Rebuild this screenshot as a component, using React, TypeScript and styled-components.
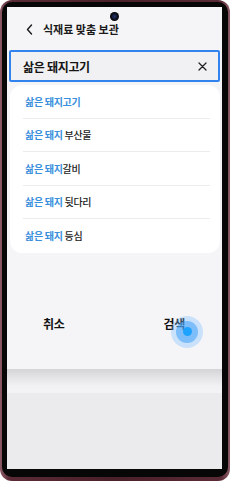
import React from "react";
import styled, { createGlobalStyle } from "styled-components";

const Global = createGlobalStyle`
  html, body { margin: 0; padding: 0; background: #ffffff; }
  body { font-family: "Noto Sans CJK KR", "Noto Sans", sans-serif; }
  * { box-sizing: border-box; }
`;

const Frame = styled.div`
  width: 230px;
  height: 481px;
  border-radius: 12px;
  padding: 2px 2px 4px 2px;
  background: linear-gradient(90deg, #8c5b67 0%, #5a2b36 4%, #4a2029 50%, #5a2b36 96%, #8c5b67 100%);
`;

const Bezel = styled.div`
  width: 100%;
  height: 100%;
  border-radius: 10px;
  background: #070707;
  padding: 5px 6px 8px 5px;
`;

const Screen = styled.div`
  position: relative;
  width: 215px;
  height: 462px;
  display: flex;
  flex-direction: column;
  overflow: hidden;
  background: #ebebed;
`;

const Sheet = styled.div`
  height: 362px;
  background: #f5f5f7;
  display: flex;
  flex-direction: column;
  position: relative;
  z-index: 1;
`;

const Camera = styled.div`
  position: absolute;
  left: 103px;
  top: 5px;
  width: 9px;
  height: 9px;
  border-radius: 50%;
  background: radial-gradient(circle, #24336a 0%, #141c3a 35%, #050505 62%);
  z-index: 5;
`;

const Header = styled.div`
  height: 24px;
  margin-top: 10px;
  display: flex;
  align-items: center;
  padding-left: 19px;
  gap: 10px;
`;

const Title = styled.span`
  font-size: 11px;
  font-weight: 700;
  color: #1a1a1a;
`;

const SearchBox = styled.div`
  margin: 9px 2px 0 2px;
  height: 32px;
  border: 2px solid #3283ee;
  border-radius: 2px;
  background: #f1f1f3;
  display: flex;
  align-items: center;
  justify-content: space-between;
  padding: 0 11px 0 12px;
`;

const Query = styled.span`
  font-size: 12px;
  font-weight: 700;
  color: #151515;
  letter-spacing: -0.3px;
`;

const Card = styled.div`
  margin: 3px 2px 0 3px;
  background: #ffffff;
  border-radius: 12px;
  display: flex;
  flex-direction: column;
`;

const Row = styled.div<{ $last?: boolean }>`
  height: 33.5px;
  margin: 0 10px 0 13px;
  padding-left: 2px;
  display: flex;
  align-items: center;
  border-bottom: ${(p) => (p.$last ? "none" : "1px solid #ececee")};
  font-size: 10px;
  font-weight: 500;
  letter-spacing: -0.3px;
  color: #222222;
  white-space: pre;
`;

const Match = styled.span`
  color: #3a8fdc;
  font-weight: 600;
`;

const Actions = styled.div`
  margin-top: 56px;
  height: 30px;
  display: flex;
  align-items: center;
  justify-content: space-between;
  padding: 0 37px 0 36px;
`;

const ActionButton = styled.span`
  position: relative;
  font-size: 12px;
  font-weight: 700;
  color: #111111;
  letter-spacing: -0.3px;
`;

const Touch = styled.span`
  position: absolute;
  left: calc(50% + 13px - 16px);
  top: calc(50% + 8px - 16px);
  width: 32px;
  height: 32px;
  border-radius: 50%;
  background: rgba(120, 190, 255, 0.35);
  display: flex;
  align-items: center;
  justify-content: center;
`;

const TouchMid = styled.span`
  width: 22px;
  height: 22px;
  border-radius: 50%;
  background: rgba(60, 160, 250, 0.55);
  display: flex;
  align-items: center;
  justify-content: center;
`;

const TouchDot = styled.span`
  width: 9px;
  height: 9px;
  border-radius: 50%;
  background: #1ea2ff;
`;

const ShadowBand = styled.div`
  height: 24px;
  background: linear-gradient(180deg, #d4d4d6 0%, #e4e4e6 35%, #f1f1f3 70%, #f3f3f5 100%);
`;

const Lower = styled.div`
  flex: 1;
  background: #ebebed;
`;

const items: { match: string; rest: string }[] = [
  { match: "삶은 돼지고기", rest: "" },
  { match: "삶은 돼지", rest: " 부산물" },
  { match: "삶은 돼지", rest: "갈비" },
  { match: "삶은 돼지", rest: " 뒷다리" },
  { match: "삶은 돼지", rest: " 등심" },
];

export default function App() {
  return (
    <>
      <Global />
      <Frame>
        <Bezel>
          <Screen>
            <Camera />
            <Sheet>
              <Header>
                <svg width="7" height="11" viewBox="0 0 7 11">
                  <path d="M5.5 1 L1.5 5.5 L5.5 10" fill="none" stroke="#1a1a1a" strokeWidth="1.4" strokeLinecap="round" strokeLinejoin="round" />
                </svg>
                <Title>식재료 맞춤 보관</Title>
              </Header>
              <SearchBox>
                <Query>삶은 돼지고기</Query>
                <svg width="9" height="9" viewBox="0 0 9 9">
                  <path d="M1 1 L8 8 M8 1 L1 8" stroke="#222" strokeWidth="1.3" strokeLinecap="round" />
                </svg>
              </SearchBox>
              <Card>
                {items.map((it, i) => (
                  <Row key={i} $last={i === items.length - 1}>
                    <Match>{it.match}</Match>
                    {it.rest}
                  </Row>
                ))}
              </Card>
              <Actions>
                <ActionButton>취소</ActionButton>
                <ActionButton>
                  검색
                  <Touch>
                    <TouchMid>
                      <TouchDot />
                    </TouchMid>
                  </Touch>
                </ActionButton>
              </Actions>
            </Sheet>
            <ShadowBand />
            <Lower />
          </Screen>
        </Bezel>
      </Frame>
    </>
  );
}
